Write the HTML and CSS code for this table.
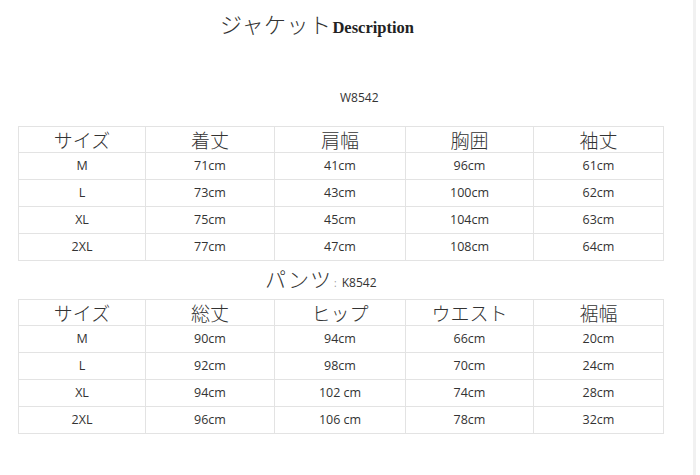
FILE: index.html
```html
<!DOCTYPE html>
<html lang="ja">
<head>
<meta charset="utf-8">
<link rel="stylesheet" href="styles.css">
</head>
<body>
<div class="page">
  <div class="content">
    <h1 class="title"><span class="jp">ジャケット</span><span class="desc">Description</span></h1>
    <div class="code">W8542</div>
    <table class="size-table first">
      <thead>
        <tr><th>サイズ</th><th>着丈</th><th>肩幅</th><th>胸囲</th><th>袖丈</th></tr>
      </thead>
      <tbody>
        <tr><td>M</td><td>71cm</td><td>41cm</td><td>96cm</td><td>61cm</td></tr>
        <tr><td>L</td><td>73cm</td><td>43cm</td><td>100cm</td><td>62cm</td></tr>
        <tr><td>XL</td><td>75cm</td><td>45cm</td><td>104cm</td><td>63cm</td></tr>
        <tr><td>2XL</td><td>77cm</td><td>47cm</td><td>108cm</td><td>64cm</td></tr>
      </tbody>
    </table>
    <div class="subtitle"><span class="jp">パンツ</span><span class="colon">:</span><span class="sub-code">K8542</span></div>
    <table class="size-table">
      <thead>
        <tr><th>サイズ</th><th>総丈</th><th>ヒップ</th><th>ウエスト</th><th>裾幅</th></tr>
      </thead>
      <tbody>
        <tr><td>M</td><td>90cm</td><td>94cm</td><td>66cm</td><td>20cm</td></tr>
        <tr><td>L</td><td>92cm</td><td>98cm</td><td>70cm</td><td>24cm</td></tr>
        <tr><td>XL</td><td>94cm</td><td>102 cm</td><td>74cm</td><td>28cm</td></tr>
        <tr><td>2XL</td><td>96cm</td><td>106 cm</td><td>78cm</td><td>32cm</td></tr>
      </tbody>
    </table>
  </div>
  <div class="edge"></div>
</div>
</body>
</html>
```

FILE: styles.css
```css
html, body {
  margin: 0;
  padding: 0;
  background: #ffffff;
}

.page {
  display: flex;
  height: 475px;
  overflow: hidden;
}

.content {
  width: 693px;
  padding: 0 0 0 18px;
  box-sizing: border-box;
  font-family: "Noto Sans CJK JP", "Open Sans", sans-serif;
  color: #333333;
}

.edge {
  width: 3px;
  background: #f1f1f1;
}

.title {
  margin: 0;
  padding: 7px 0 0 202px;
  height: 32px;
  display: flex;
  align-items: baseline;
  font-weight: normal;
}

.title .jp {
  font-family: "Noto Sans CJK JP", sans-serif;
  font-weight: 300;
  font-size: 22px;
  letter-spacing: 0.5px;
  color: #333;
}

.title .desc {
  font-family: "Liberation Serif", serif;
  font-weight: bold;
  font-size: 16.5px;
  color: #222;
  margin-left: 1px;
}

.code {
  margin: 50px 0 0 322px;
  height: 18px;
  line-height: 18px;
  font-family: "Open Sans", sans-serif;
  font-size: 12px;
  color: #333;
}

.size-table {
  margin-top: 10px;
  border-collapse: collapse;
  width: 645px;
  table-layout: fixed;
}

.size-table.first {
  margin-top: 19px;
}

.size-table th,
.size-table td {
  border: 1px solid #e3e3e3;
  text-align: center;
  padding: 0;
  color: #333;
}

.size-table th:nth-child(1) { width: 126px; }
.size-table th:nth-child(2) { width: 128px; }
.size-table th:nth-child(3) { width: 130px; }
.size-table th:nth-child(4) { width: 127px; }
.size-table th:nth-child(5) { width: 129px; }

.size-table th {
  height: 25px;
  font-family: "Noto Sans CJK JP", sans-serif;
  font-weight: 300;
  font-size: 19px;
  line-height: 25px;
}

.size-table td {
  height: 26px;
  font-family: "Open Sans", sans-serif;
  font-size: 12.5px;
  line-height: 26px;
}

.subtitle {
  margin: 2px 0 0 247px;
  height: 26px;
  display: flex;
  align-items: baseline;
}

.subtitle .jp {
  font-family: "Noto Sans CJK JP", sans-serif;
  font-weight: 300;
  font-size: 21px;
  letter-spacing: 1px;
  color: #333;
}

.subtitle .colon {
  font-family: "Open Sans", sans-serif;
  font-size: 10px;
  color: #999;
  margin: 0 5px 0 2px;
}

.subtitle .sub-code {
  font-family: "Open Sans", sans-serif;
  font-size: 12px;
  color: #333;
}
```
